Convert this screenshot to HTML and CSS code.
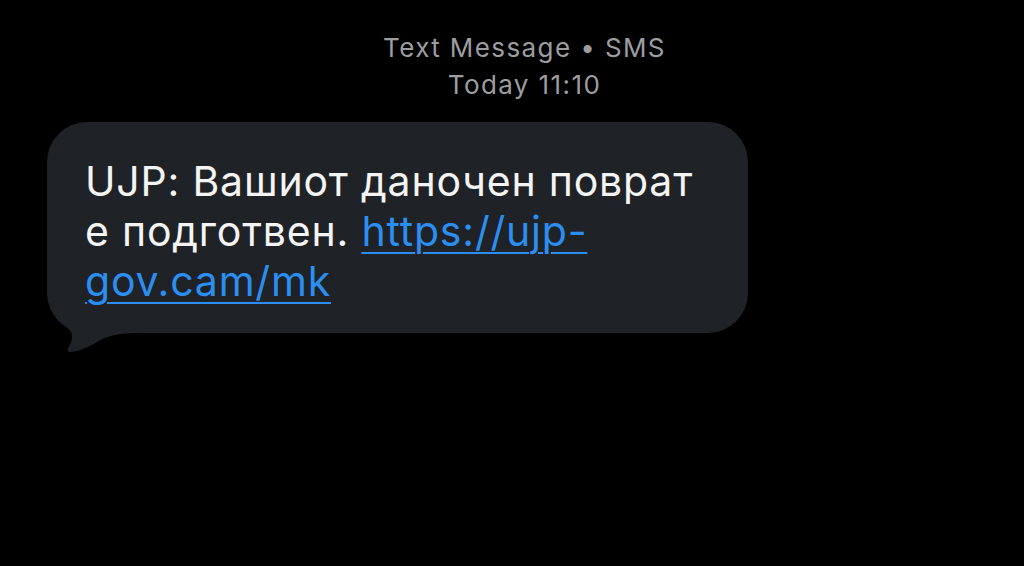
FILE: index.html
```html
<!DOCTYPE html>
<html lang="mk">
<head>
<meta charset="utf-8">
<link rel="stylesheet" href="styles.css">
</head>
<body>
<div class="screen">
  <div class="meta">
    <div class="meta-line">Text Message • SMS</div>
    <div class="meta-line">Today 11:10</div>
  </div>
  <div class="bubble-row">
    <div class="bubble">
      <svg class="tail" width="90" height="62" viewBox="0 0 90 62" aria-hidden="true">
        <path d="M0 0 H90 V41 C72 41 60 44 50 50 C40 56 30 60 23 60 C21 60 20 58 21 56 C25 50 26 45 24 40 C16 30 4 20 0 0 Z" fill="#1f2226"/>
      </svg>
      <p class="msg">UJP: Вашиот даночен поврат е подготвен. <a class="link" href="#">https://ujp-<br>gov.cam/mk</a></p>
    </div>
  </div>
</div>
</body>
</html>
```
FILE: styles.css
```css
html, body {
  margin: 0;
  padding: 0;
  background: #000;
}
.screen {
  width: 1024px;
  height: 566px;
  background: #000;
  overflow: hidden;
  font-family: Inter, "Liberation Sans", sans-serif;
}
.meta {
  padding-top: 29px;
  padding-left: 25px;
  text-align: center;
  color: #9d9da1;
  font-size: 26px;
  line-height: 37px;
  letter-spacing: 1.4px;
}
.bubble-row {
  padding-left: 47px;
  padding-top: 19px;
}
.bubble {
  position: relative;
  width: 701px;
  height: 211px;
  box-sizing: border-box;
  padding: 34px 40px 0 38px;
  background: #1f2226;
  border-radius: 40px;
}
.msg {
  position: relative;
  margin: 0;
  color: #f4f4f4;
  font-size: 41px;
  line-height: 50px;
  letter-spacing: 0.8px;
}
.link {
  color: #2a8ff0;
  text-decoration: underline;
  text-decoration-thickness: 2px;
  text-underline-offset: 6px;
}
.tail {
  position: absolute;
  left: 0;
  bottom: -21px;
}
```
